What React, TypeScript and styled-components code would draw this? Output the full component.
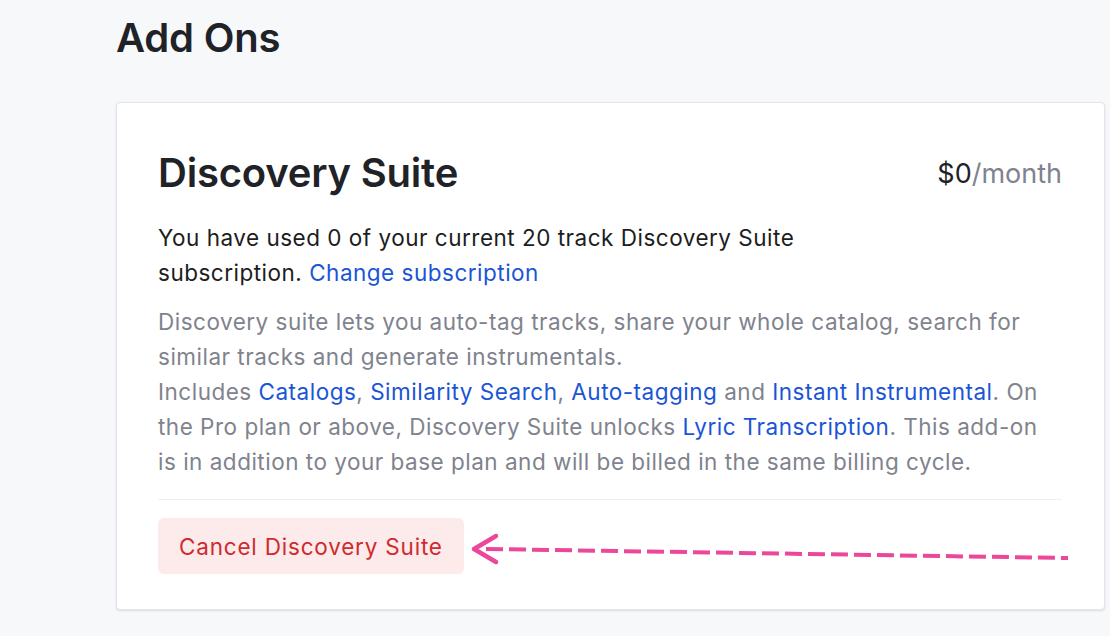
import React from "react";
import styled, { createGlobalStyle } from "styled-components";

const GlobalStyle = createGlobalStyle`
  html, body {
    margin: 0;
    padding: 0;
    background: #f7f8fa;
    font-family: Inter, "Noto Sans", sans-serif;
    overflow: hidden;
  }
`;

const Page = styled.div`
  width: 1110px;
  height: 636px;
  padding: 14px 0 0 116px;
  box-sizing: border-box;
  position: relative;
`;

const PageTitle = styled.h1`
  margin: 0 0 40px;
  font-size: 40px;
  line-height: 48px;
  font-weight: 600;
  color: #1f2328;
  letter-spacing: -0.2px;
`;

const Card = styled.section`
  width: 989px;
  box-sizing: border-box;
  background: #fff;
  border: 1px solid #e3e5e8;
  border-radius: 4px;
  box-shadow: 0 1px 2px rgba(16, 24, 40, 0.12);
  padding: 46px 42px 35px 41px;
`;

const CardHeader = styled.div`
  display: flex;
  justify-content: space-between;
  align-items: center;
  margin-bottom: 23px;
`;

const CardTitle = styled.h2`
  margin: 0;
  font-size: 40px;
  line-height: 48px;
  font-weight: 600;
  color: #1f2328;
  letter-spacing: -0.2px;
`;

const Price = styled.div`
  font-size: 27px;
  color: #1f2328;
`;

const Per = styled.span`
  color: #80838d;
`;

const Text = styled.p<{ $muted?: boolean; $narrow?: boolean }>`
  margin: 0;
  font-size: 22.5px;
  line-height: 35px;
  letter-spacing: 0.5px;
  color: ${(p) => (p.$muted ? "#80838d" : "#1c1d21")};
  max-width: ${(p) => (p.$narrow ? "660px" : "none")};
`;

const Link = styled.a`
  color: #1a55d6;
  text-decoration: none;
`;

const Stack = styled.div`
  display: flex;
  flex-direction: column;
  gap: 14px;
`;

const Divider = styled.hr`
  border: none;
  border-top: 1px solid #eeeff1;
  margin: 20px 0 18px;
`;

const CancelButton = styled.button`
  font-family: inherit;
  font-size: 22.5px;
  letter-spacing: 0.8px;
  color: #cf2a2f;
  background: #fdeaea;
  border: none;
  border-radius: 6px;
  padding: 0 21px;
  height: 56px;
  cursor: pointer;
`;

const Arrow = styled.svg`
  position: absolute;
  left: 470px;
  top: 531px;
`;

export default function App() {
  return (
    <>
      <GlobalStyle />
      <Page>
        <PageTitle>Add Ons</PageTitle>
        <Card>
          <CardHeader>
            <CardTitle>Discovery Suite</CardTitle>
            <Price>
              $0<Per>/month</Per>
            </Price>
          </CardHeader>
          <Stack>
            <Text $narrow>
              You have used 0 of your current 20 track Discovery Suite subscription.{" "}
              <Link href="#">Change subscription</Link>
            </Text>
            <Text $muted>
              Discovery suite lets you auto-tag tracks, share your whole catalog, search for similar tracks and
              generate instrumentals.
              <br />
              Includes <Link href="#">Catalogs</Link>, <Link href="#">Similarity Search</Link>,{" "}
              <Link href="#">Auto-tagging</Link> and <Link href="#">Instant Instrumental</Link>. On the Pro plan or
              above, Discovery Suite unlocks <Link href="#">Lyric Transcription</Link>. This add-on is in addition to
              your base plan and will be billed in the same billing cycle.
            </Text>
          </Stack>
          <Divider />
          <CancelButton>Cancel Discovery Suite</CancelButton>
        </Card>
        <Arrow width="610" height="40" viewBox="0 0 610 40">
          <path
            d="M16 18 L598 27"
            stroke="#ec4899"
            strokeWidth="4"
            strokeDasharray="17 6"
            strokeLinecap="butt"
            fill="none"
          />
          <path
            d="M26 5 L4 18 L26 31"
            stroke="#ec4899"
            strokeWidth="4.5"
            strokeLinecap="round"
            strokeLinejoin="round"
            fill="none"
          />
        </Arrow>
      </Page>
    </>
  );
}
